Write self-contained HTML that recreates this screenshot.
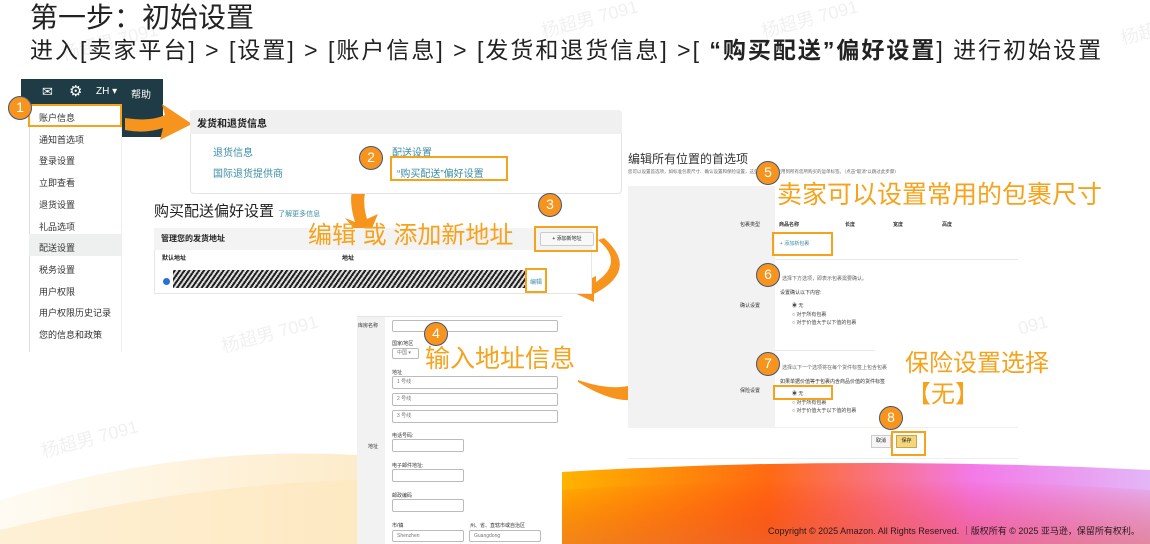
<!DOCTYPE html>
<html><head><meta charset="utf-8"><style>
*{margin:0;padding:0;box-sizing:border-box}
body{width:1150px;height:544px;overflow:hidden;background:#fff;position:relative;font-family:"Liberation Sans","Noto Sans CJK SC",sans-serif;color:#222}
.a{position:absolute;white-space:nowrap}
.c{position:absolute;width:24px;height:24px;border-radius:50%;background:#f7941d;border:1.5px solid #3d5580;color:#fff;font-size:14px;text-align:center;line-height:21px}
.ob{position:absolute;border:2.5px solid #f7a21b}
.or{position:absolute;white-space:nowrap;color:#f7a21b}
.s{font-size:8px;color:#333}
.in{position:absolute;border:1px solid #bbb;border-radius:2px;background:#fff;font-size:7px;color:#777;padding-left:4px;line-height:11px}
.wm{position:absolute;color:rgba(0,0,0,.06);font-size:18px;transform:rotate(-15deg);white-space:nowrap}
</style></head><body>
<svg class="a" style="left:0;top:0" width="1150" height="544">
<defs>
<linearGradient id="g1" x1="0" x2="1"><stop offset="0" stop-color="#ffb300"/><stop offset=".35" stop-color="#ff6a12"/><stop offset=".7" stop-color="#f37ae8"/><stop offset="1" stop-color="#e3b6f7"/></linearGradient>
<linearGradient id="g2" x1="0" x2="1"><stop offset="0" stop-color="#fffbf3"/><stop offset="1" stop-color="#fdeccb"/></linearGradient>
<linearGradient id="g3" x1="0" x2="0" y1="0" y2="1"><stop offset="0" stop-color="#ff0000" stop-opacity="0"/><stop offset="1" stop-color="#e0503a" stop-opacity=".45"/></linearGradient>
</defs>
<path d="M0 500 Q180 445 357 455 L357 544 L0 544Z" fill="url(#g2)"/>
<path d="M0 530 Q180 485 357 480 L357 544 L0 544Z" fill="#fde6b8" opacity=".5"/>
<path d="M562 472 Q850 455 1150 470 L1150 544 L562 544Z" fill="url(#g1)"/>
<path d="M562 490 Q850 470 1150 490 L1150 544 L562 544Z" fill="url(#g3)"/>
</svg>
<div class="wm" style="left:60px;top:28px">杨超男 7091</div>
<div class="wm" style="left:540px;top:5px">杨超男 7091</div>
<div class="wm" style="left:760px;top:5px">杨超男 7091</div>
<div class="wm" style="left:1120px;top:18px">杨超男</div>
<div class="wm" style="left:40px;top:425px">杨超男 7091</div>
<div class="wm" style="left:220px;top:320px">杨超男 7091</div>
<div class="wm" style="left:950px;top:320px">杨超男 7091</div>

<div class="a" style="left:30px;top:0px;font-size:28px;line-height:36px;color:#222">第一步：初始设置</div>
<div class="a" style="left:30px;top:35px;font-size:23px;line-height:30px;letter-spacing:2px;color:#222">进入[卖家平台] &gt; [设置] &gt; [账户信息] &gt; [发货和退货信息] &gt;[ <b>“购买配送”偏好设置</b>] 进行初始设置</div>

<div class="a" style="left:21px;top:79px;width:142px;height:27px;background:#1e3b46"></div>
<div class="a" style="left:122px;top:106px;width:41px;height:31px;background:#1e3b46"></div>
<div class="a" style="left:42px;top:84px;color:#fff;font-size:13px">✉</div>
<div class="a" style="left:69px;top:82px;color:#fff;font-size:15px">⚙</div>
<div class="a" style="left:96px;top:86px;color:#fff;font-size:10px">ZH ▾</div>
<div class="a" style="left:131px;top:86px;color:#fff;font-size:10px">帮助</div>
<div class="a" style="left:29px;top:106px;width:93px;height:246px;background:#fff;border-left:1px solid #ddd;border-right:1px solid #eee;overflow:hidden"></div>
<div class="a" style="left:29px;top:234px;width:93px;height:22px;background:#eef0f0"></div>
<div class="a" style="left:39px;top:108px;font-size:9px;line-height:21.7px;color:#333;white-space:normal;height:244px;overflow:hidden">账户信息<br>通知首选项<br>登录设置<br>立即查看<br>退货设置<br>礼品选项<br>配送设置<br>税务设置<br>用户权限<br>用户权限历史记录<br>您的信息和政策<br>波斯订阅</div>
<div class="ob" style="left:28px;top:104px;width:94px;height:23px"></div>
<div class="c" style="left:8px;top:96px">1</div>

<svg class="a" style="left:0;top:0" width="1150" height="544">
<path d="M125 118 Q150 122 165 115 L162 104 L192 124 L160 140 L163 128 Q145 134 125 130Z" fill="#f7941d"/>
<path d="M372 172 Q342 180 355 222 L345 218 L366 242 L378 214 L367 219 Q358 188 378 176Z" fill="#f7941d"/>
<path d="M598 240 Q625 262 596 282 L596 276 L568 290 L594 302 L594 294 Q640 270 604 238Z" fill="#f7941d"/>
<path d="M578 380 Q612 392 636 384 L632 376 L646 396 L630 412 L632 400 Q610 402 578 382Z" fill="#f7941d"/>
</svg>

<div class="a" style="left:190px;top:110px;width:432px;height:84px;border:1px solid #e3e3e3;border-radius:4px;background:#fff"></div>
<div class="a" style="left:190px;top:110px;width:432px;height:24px;background:#f0f0f0;border-radius:4px 4px 0 0"></div>
<div class="a" style="left:197px;top:115px;font-size:10px;font-weight:bold">发货和退货信息</div>
<div class="a" style="left:213px;top:144px;font-size:10px;color:#3d8ea5">退货信息</div>
<div class="a" style="left:213px;top:165px;font-size:10px;color:#3d8ea5">国际退货提供商</div>
<div class="a" style="left:392px;top:144px;font-size:10px;color:#3d8ea5">配送设置</div>
<div class="a" style="left:397px;top:165px;font-size:10px;color:#3d8ea5">“购买配送”偏好设置</div>
<div class="ob" style="left:390px;top:156px;width:118px;height:25px"></div>
<div class="c" style="left:359px;top:146px">2</div>

<div class="a" style="left:154px;top:200px;font-size:15px;color:#222">购买配送偏好设置 <span style="font-size:7px;color:#3d8ea5">了解更多信息</span></div>
<div class="a" style="left:154px;top:228px;width:438px;height:66px;border:1px solid #e6e6e6;background:#fff"></div>
<div class="a" style="left:154px;top:228px;width:438px;height:22px;background:#f3f3f3"></div>
<div class="a" style="left:161px;top:233px;font-size:8px;font-weight:bold">管理您的发货地址</div>
<div class="a" style="left:162px;top:253px;font-size:6px;font-weight:bold">默认地址</div>
<div class="a" style="left:342px;top:253px;font-size:6px;font-weight:bold">地址</div>
<div class="a" style="left:163px;top:278px;width:7px;height:7px;border-radius:50%;background:#2a6fd6"></div>
<div class="a" style="left:173px;top:270px;width:352px;height:18px;background:repeating-linear-gradient(-55deg,#222 0 2px,#ddd 2px 4px)"></div>
<div class="a" style="left:530px;top:277px;font-size:6px;color:#3d8ea5">编辑</div>
<div class="ob" style="left:525px;top:268px;width:22px;height:25px"></div>
<div class="a" style="left:540px;top:232px;width:54px;height:14px;border:1px solid #ccc;border-radius:2px;background:#f8f8f8;font-size:5px;text-align:center;line-height:12px">+ 添加新地址</div>
<div class="ob" style="left:534px;top:226px;width:64px;height:26px"></div>
<div class="c" style="left:538px;top:193px">3</div>
<div class="or" style="left:308px;top:220px;font-size:24px;line-height:32px">编辑 或 添加新地址</div>

<div class="a" style="left:357px;top:316px;width:205px;height:228px;background:#fff;border-top:1px solid #e5e5e5"></div>
<div class="a" style="left:357px;top:317px;width:28px;height:227px;background:#f2f2f2"></div>
<div class="a s" style="left:358px;top:322px;font-size:5px">库房名称</div>
<div class="in" style="left:392px;top:320px;width:166px;height:12px"></div>
<div class="c" style="left:424px;top:322px">4</div>
<div class="a s" style="left:392px;top:340px;font-size:5px">国家/地区</div>
<div class="in" style="left:392px;top:348px;width:27px;height:11px;font-size:5px;line-height:9px">中国 ▾</div>
<div class="or" style="left:425px;top:343px;font-size:25px;line-height:32px">输入地址信息</div>
<div class="a s" style="left:392px;top:369px;font-size:5px">地址</div>
<div class="in" style="left:392px;top:376px;width:166px;height:13px;font-size:5px">1 号线</div>
<div class="in" style="left:392px;top:393px;width:166px;height:13px;font-size:5px">2 号线</div>
<div class="in" style="left:392px;top:410px;width:166px;height:13px;font-size:5px">3 号线</div>
<div class="a s" style="left:368px;top:443px;font-size:5px">地址</div>
<div class="a s" style="left:392px;top:432px;font-size:5px">电话号码:</div>
<div class="in" style="left:392px;top:439px;width:72px;height:13px"></div>
<div class="a s" style="left:392px;top:462px;font-size:5px">电子邮件地址:</div>
<div class="in" style="left:392px;top:469px;width:72px;height:13px"></div>
<div class="a s" style="left:392px;top:492px;font-size:5px">邮政编码</div>
<div class="in" style="left:392px;top:499px;width:72px;height:13px"></div>
<div class="a s" style="left:392px;top:522px;font-size:5px">市/镇</div>
<div class="a s" style="left:470px;top:522px;font-size:5px">州、省、直辖市或自治区</div>
<div class="in" style="left:392px;top:530px;width:72px;height:12px;font-size:5px">Shenzhen</div>
<div class="in" style="left:469px;top:530px;width:72px;height:12px;font-size:5px">Guangdong</div>

<div class="a" style="left:628px;top:150px;font-size:12px;color:#333">编辑所有位置的首选项</div>
<div class="a" style="left:628px;top:169px;font-size:4.5px;color:#666">您可以设置首选项，如标准包裹尺寸、确认设置和保险设置，这些首选项将应用到所有您所购买的运单标签。（点击“取消”以跳过此步骤）</div>
<div class="a" style="left:628px;top:186px;width:390px;height:242px;background:#fff;border-bottom:1px solid #eee"></div>
<div class="a" style="left:628px;top:186px;width:147px;height:242px;background:#f2f2f2"></div>
<div class="a" style="left:775px;top:259px;width:243px;height:1px;background:#e8e8e8"></div>
<div class="a" style="left:775px;top:350px;width:100px;height:1px;background:#e8e8e8"></div>
<div class="a s" style="left:740px;top:221px;font-size:5px">包裹类型</div>
<div class="a s" style="left:779px;top:221px;font-size:5px;font-weight:bold">商品名称</div>
<div class="a s" style="left:845px;top:221px;font-size:5px;font-weight:bold">长度</div>
<div class="a s" style="left:893px;top:221px;font-size:5px;font-weight:bold">宽度</div>
<div class="a s" style="left:942px;top:221px;font-size:5px;font-weight:bold">高度</div>
<div class="a" style="left:780px;top:240px;font-size:5px;color:#3d8ea5">+ 添加新包裹</div>
<div class="ob" style="left:772px;top:232px;width:61px;height:24px"></div>
<div class="c" style="left:756px;top:161px">5</div>
<div class="or" style="left:777px;top:178px;font-size:25px;line-height:34px">卖家可以设置常用的包裹尺寸</div>
<div class="c" style="left:756px;top:263px">6</div>
<div class="a" style="left:782px;top:275px;font-size:5px;color:#666">选择下方选项，即表示包裹需要确认。</div>
<div class="a s" style="left:780px;top:289px;font-size:5px">设置确认以下内容:</div>
<div class="a s" style="left:740px;top:302px;font-size:5px">确认设置</div>
<div class="a" style="left:792px;top:302px;font-size:5px;line-height:8.5px;color:#444;white-space:normal">◉ 无<br>○ 对于所有包裹<br>○ 对于价值大于以下值的包裹</div>
<div class="c" style="left:756px;top:352px">7</div>
<div class="a" style="left:782px;top:364px;font-size:5px;color:#666">选择以下一个选项将在每个货件标签上包含包裹</div>
<div class="a s" style="left:780px;top:378px;font-size:5px">如果单据价值等于包裹内含商品价值的货件标签</div>
<div class="a s" style="left:740px;top:387px;font-size:5px">保险设置</div>
<div class="a" style="left:792px;top:390px;font-size:5px;line-height:8.5px;color:#444;white-space:normal">◉ 无<br>○ 对于所有包裹<br>○ 对于价值大于以下值的包裹</div>
<div class="ob" style="left:773px;top:385px;width:60px;height:15px"></div>
<div class="or" style="left:905px;top:349px;font-size:24px;line-height:30px">保险设置选择</div>
<div class="or" style="left:907px;top:380px;font-size:24px;line-height:30px">【无】</div>
<div class="c" style="left:879px;top:406px">8</div>
<div class="a" style="left:871px;top:435px;width:20px;height:13px;border:1px solid #ccc;background:#f5f5f5;font-size:5px;text-align:center;line-height:11px">取消</div>
<div class="a" style="left:896px;top:435px;width:21px;height:13px;border:1px solid #c9a64a;background:#f3d77a;font-size:5px;text-align:center;line-height:11px">保存</div>
<div class="ob" style="left:891px;top:431px;width:35px;height:25px"></div>
<div class="a" style="left:628px;top:458px;width:390px;height:1px;background:#eee"></div>

<div class="a" style="left:768px;top:524px;font-size:9px;color:#2a1a1a">Copyright © 2025 Amazon. All Rights Reserved. ｜版权所有 © 2025 亚马逊，保留所有权利。</div>
</body></html>
